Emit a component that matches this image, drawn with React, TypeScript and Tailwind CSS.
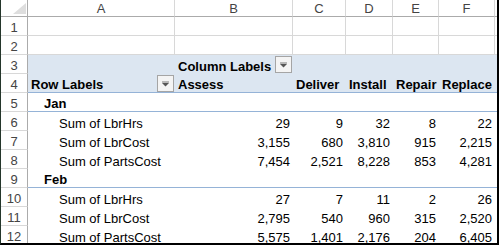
import React from 'react';

const font = { fontFamily: '"Liberation Sans", Arial, sans-serif' };

type Row = { label: string; kind: 'group' | 'item'; values: string[] };

const rows: Row[] = [
  { label: 'Jan', kind: 'group', values: [] },
  { label: 'Sum of LbrHrs', kind: 'item', values: ['29', '9', '32', '8', '22'] },
  { label: 'Sum of LbrCost', kind: 'item', values: ['3,155', '680', '3,810', '915', '2,215'] },
  { label: 'Sum of PartsCost', kind: 'item', values: ['7,454', '2,521', '8,228', '853', '4,281'] },
  { label: 'Feb', kind: 'group', values: [] },
  { label: 'Sum of LbrHrs', kind: 'item', values: ['27', '7', '11', '2', '26'] },
  { label: 'Sum of LbrCost', kind: 'item', values: ['2,795', '540', '960', '315', '2,520'] },
  { label: 'Sum of PartsCost', kind: 'item', values: ['5,575', '1,401', '2,176', '204', '6,405'] },
];

// G is only a sliver at the right edge, so its heading letter is never seen
const letters = ['A', 'B', 'C', 'D', 'E', 'F', ''];
const colLabels = ['Assess', 'Deliver', 'Install', 'Repair', 'Replace', 'Grand Total'];

function FilterButton() {
  return (
    <div className="mt-px mr-[1px] flex h-[17px] w-[17px] shrink-0 items-center justify-center self-start border border-[#a5a5a5] bg-[#f4f4f4]">
      <svg width="9" height="6" viewBox="0 0 9 6">
        <path d="M1 1h7" stroke="#7a7a7a" strokeWidth="1" />
        <path d="M1 2h7L4.5 5.5z" fill="#555" />
      </svg>
    </div>
  );
}

function RowNum({ n }: { n: number }) {
  return (
    <div className="flex items-end justify-center border-r border-b border-r-[#ababab] border-b-[#d8d8d8] bg-white text-[13px] leading-[15px] text-[#444]">
      {n}
    </div>
  );
}

export default function App() {
  return (
    <div className="h-[246px] w-[501px] bg-white" style={font}>
      <div className="h-[245px] w-[499px] overflow-hidden border-l border-r-2 border-b-2 border-l-[#24362b] border-r-black border-b-black">
        <div className="grid grid-cols-[27px_147px_118px_53px_47px_46px_56px_90px] grid-rows-[17px_repeat(12,19px)] text-[13px] leading-[15px] text-black">
          {/* column headings */}
          <div className="relative border-r border-b border-[#ababab] bg-white">
            <svg className="absolute right-[1px] bottom-[2px]" width="13" height="11" viewBox="0 0 13 11">
              <path d="M13 0V11H0z" fill="#dedede" />
            </svg>
          </div>
          {letters.map((l, i) => (
            <div
              key={i}
              className="flex items-center justify-center border-r border-b border-r-[#d8d8d8] border-b-[#ababab] bg-white text-[#444]"
            >
              {l}
            </div>
          ))}

          {/* rows 1-2 */}
          {[1, 2].map((n) => (
            <React.Fragment key={n}>
              <RowNum n={n} />
              {letters.map((_, i) => (
                <div key={i} className="border-r border-b border-[#d8d8d8] bg-white" />
              ))}
            </React.Fragment>
          ))}

          {/* row 3 */}
          <RowNum n={3} />
          <div className="bg-[#dce6f1]" />
          <div className="flex items-end justify-between bg-[#dce6f1] pl-[3px]">
            <span className="whitespace-nowrap font-bold">Column Labels</span>
            <FilterButton />
          </div>
          {letters.slice(2).map((_, i) => (
            <div key={i} className="bg-[#dce6f1]" />
          ))}

          {/* row 4 */}
          <RowNum n={4} />
          <div className="flex items-end justify-between border-b border-[#95b3d7] bg-[#dce6f1] pl-[3px]">
            <span className="whitespace-nowrap font-bold">Row Labels</span>
            <FilterButton />
          </div>
          {colLabels.map((c) => (
            <div
              key={c}
              className="flex items-end overflow-hidden border-b border-[#95b3d7] bg-[#dce6f1] pl-[3px] font-bold whitespace-nowrap"
            >
              {c}
            </div>
          ))}

          {/* data rows */}
          {rows.map((r, i) => {
            const n = i + 5;
            const line = r.kind === 'group' ? 'border-b border-[#95b3d7]' : '';
            return (
              <React.Fragment key={n}>
                <RowNum n={n} />
                <div
                  className={`flex items-end whitespace-nowrap bg-white ${line} ${
                    r.kind === 'group' ? 'pl-[16px] font-bold' : 'pl-[31px]'
                  }`}
                >
                  {r.label}
                </div>
                {[0, 1, 2, 3, 4].map((k) => (
                  <div key={k} className={`flex items-end justify-end bg-white pr-[3px] ${line}`}>
                    {r.values[k] ?? ''}
                  </div>
                ))}
                <div className={`bg-white ${line}`} />
              </React.Fragment>
            );
          })}
        </div>
      </div>
    </div>
  );
}
